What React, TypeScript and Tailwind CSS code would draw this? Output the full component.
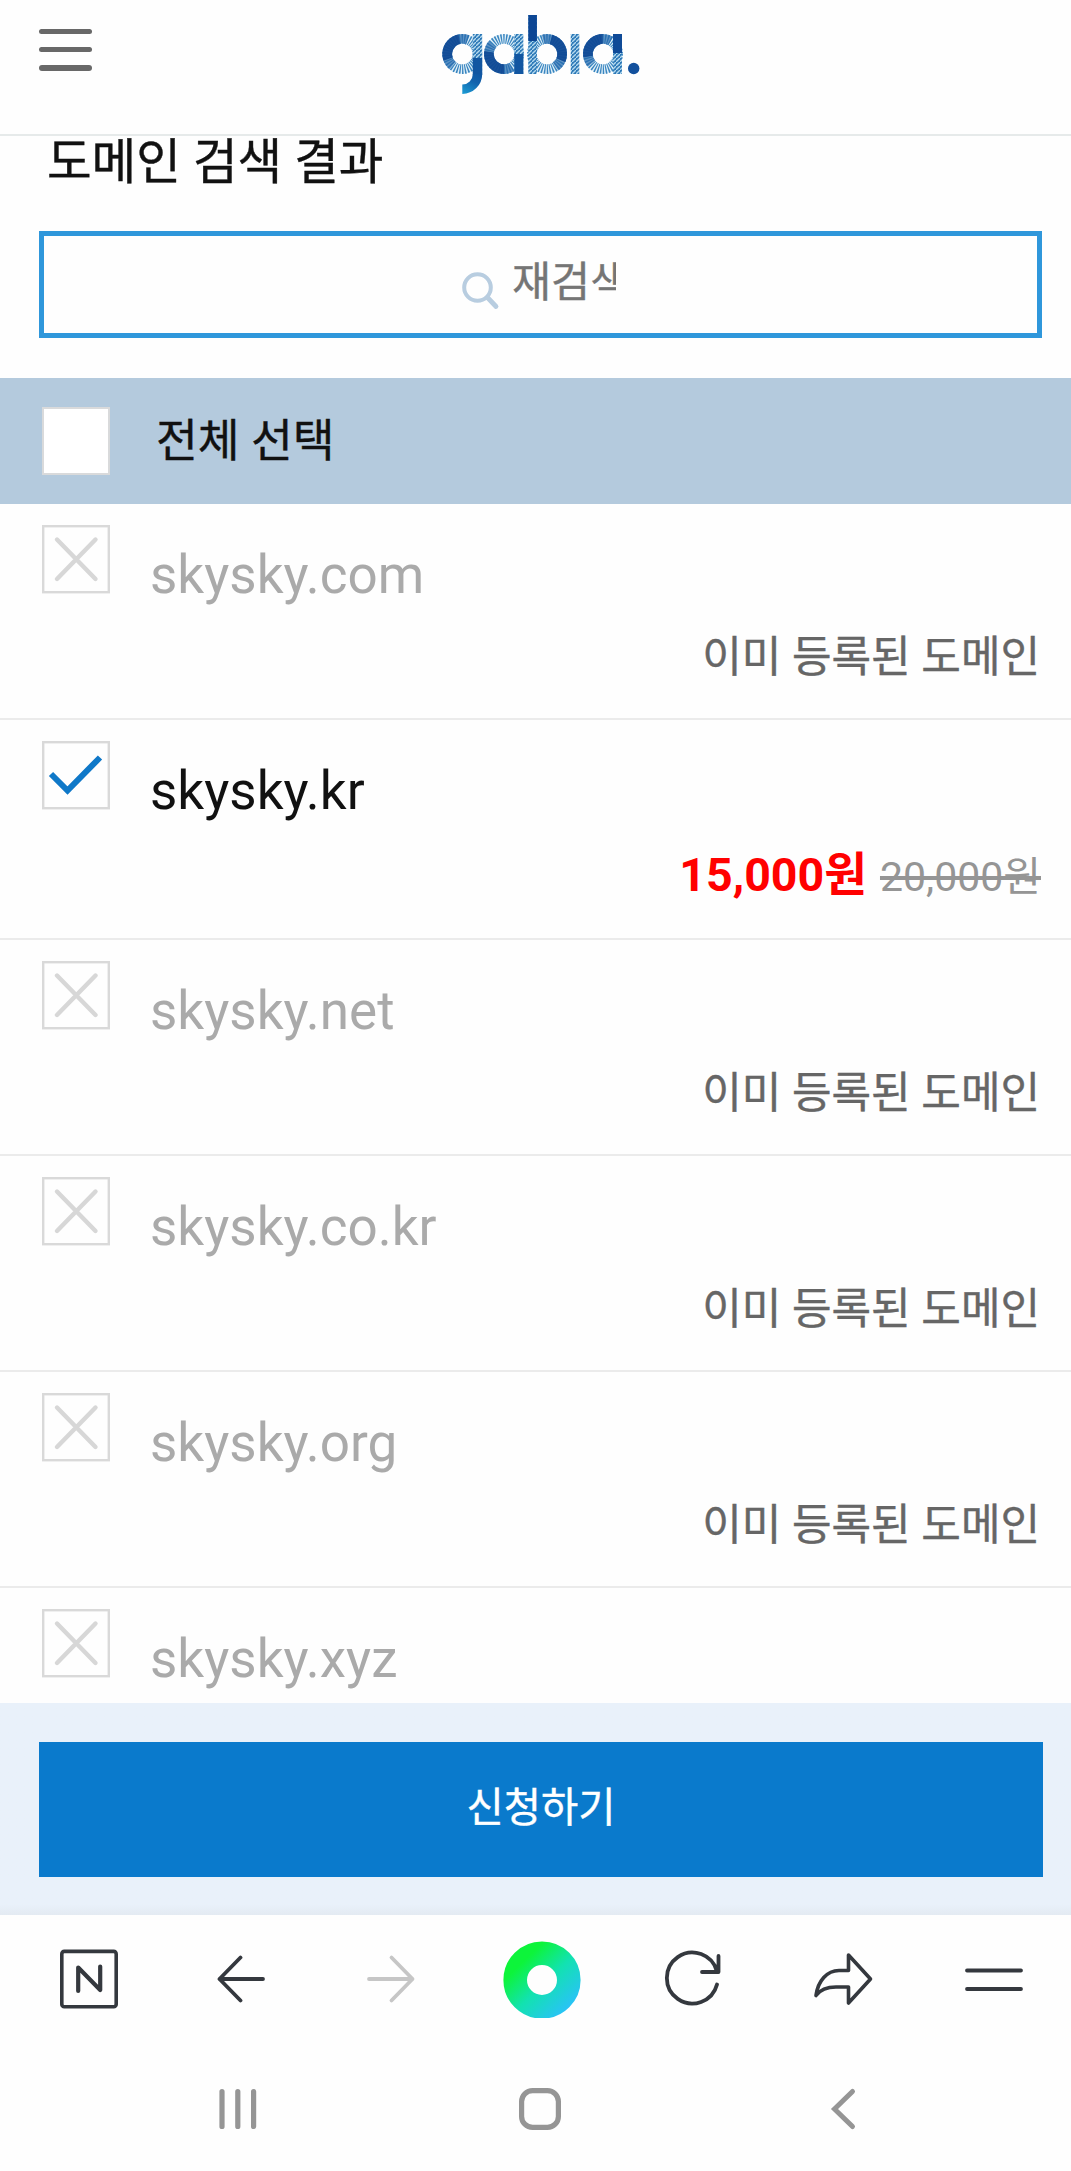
import { Fragment } from "react";

interface Domain {
  name: string;
  available: boolean;
  price?: string;
  originalPrice?: string;
}

const DOMAINS: Domain[] = [
  { name: "skysky.com", available: false },
  { name: "skysky.kr", available: true, price: "15,000원", originalPrice: "20,000원" },
  { name: "skysky.net", available: false },
  { name: "skysky.co.kr", available: false },
  { name: "skysky.org", available: false },
  { name: "skysky.xyz", available: false },
];

// Ring centre and the angle (deg) where its solid part starts
const RINGS = [
  { cx: 22.3, start: 130 },
  { cx: 64, start: 60 },
  { cx: 107, start: 255 },
  { cx: 163, start: 140 },
];

function GabiaLogo() {
  return (
    <svg width="200" height="84" viewBox="0 0 200 84" fill="none" role="img" aria-label="gabia">
      <defs>
        <linearGradient id="stem" gradientUnits="userSpaceOnUse" x1="37" y1="55" x2="22" y2="84">
          <stop offset="0" stopColor="#0f4f9d" />
          <stop offset="0.5" stopColor="#1263ad" />
          <stop offset="1" stopColor="#1c9fd6" />
        </linearGradient>
        <pattern id="weave" width="4" height="4" patternUnits="userSpaceOnUse">
          <rect width="4" height="4" fill="#2f7ab8" />
          <path d="M0 4L4 0" stroke="#b4d9ee" strokeWidth="1.3" />
        </pattern>
      </defs>
      {RINGS.map(({ cx, start }) => (
        <Fragment key={cx}>
          <circle cx={cx} cy="44" r="15.1" stroke="#e2f0f8" strokeWidth="9.4" />
          <circle cx={cx} cy="44" r="15.1" stroke="#3a86c0" strokeWidth="9.7" strokeDasharray="1.3 1.2" />
          <circle
            cx={cx}
            cy="44"
            r="15.1"
            stroke="#2468ac"
            strokeOpacity="0.7"
            strokeWidth="9.7"
            strokeDasharray="42 53"
            transform={`rotate(${start} ${cx} 44)`}
          />
          <circle
            cx={cx}
            cy="44"
            r="15.1"
            stroke="#0d4592"
            strokeOpacity="0.85"
            strokeWidth="9.7"
            strokeDasharray="26 69"
            transform={`rotate(${start + 30} ${cx} 44)`}
          />
        </Fragment>
      ))}
      <rect x="32.8" y="24" width="9.4" height="40" fill="url(#weave)" />
      <rect x="32.8" y="48" width="9.4" height="17" fill="#1256a1" />
      <path d="M37.5 64A15.2 15.2 0 0 1 22.3 79.2" stroke="url(#stem)" strokeWidth="9.4" />
      <rect x="74.3" y="24" width="9" height="40" fill="url(#weave)" />
      <rect x="74.3" y="44" width="9" height="20" fill="#1256a1" />
      <rect x="88.3" y="5" width="8.6" height="59" fill="url(#weave)" />
      <rect x="88.3" y="5" width="8.6" height="26" fill="#0d4694" />
      <rect x="130.7" y="24" width="8.6" height="40" fill="url(#weave)" />
      <rect x="173" y="24" width="9" height="40" fill="url(#weave)" />
      <rect x="173" y="24" width="9" height="19" fill="#0f4a97" />
      <circle cx="193.7" cy="58.5" r="5.7" fill="#12509d" />
    </svg>
  );
}

function Checkbox({ domain }: { domain: Domain }) {
  return (
    <svg width="68" height="69" viewBox="0 0 68 69" fill="none" className="shrink-0">
      <rect x="1.2" y="1.2" width="65.6" height="66" stroke="#d9d9d9" strokeWidth="2.4" />
      {domain.available ? (
        <path d="M9 33L25.5 49.5L58 16.5" stroke="#0f78c8" strokeWidth="6" />
      ) : (
        <path d="M15 14.5L53.5 54M53.5 14.5L15 54" stroke="#d7d7d7" strokeWidth="4.4" strokeLinecap="round" />
      )}
    </svg>
  );
}

function DomainRow({ domain }: { domain: Domain }) {
  return (
    <li
      className={`shrink-0 border-b-2 border-[#ebebeb] pt-[21px] pl-[42px] pr-[30px] ${
        domain.available ? "h-[220px]" : "h-[216px]"
      }`}
    >
      <div className="flex h-[102px]">
        <Checkbox domain={domain} />
        <span
          className={`ml-[40px] mt-[20px] text-[53px] leading-[60px] ${
            domain.available ? "text-[#111]" : "text-[#aaa]"
          }`}
        >
          {domain.name}
        </span>
      </div>
      {domain.available ? (
        <div className="flex items-baseline justify-end gap-[13px] pt-[2px]">
          <strong className="text-[46.5px] leading-[60px] font-bold text-[#f00]">{domain.price}</strong>
          <del className="text-[41px] leading-[60px] text-[#959595]">{domain.originalPrice}</del>
        </div>
      ) : (
        <p className="pr-[1px] text-right text-[43px] leading-[60px] text-[#666] [-webkit-text-stroke:0.4px]">
          이미 등록된 도메인
        </p>
      )}
    </li>
  );
}

function BrowserBar() {
  return (
    <div className="grid h-[128px] shrink-0 grid-cols-7 place-items-center pr-[2px] pl-[15px]">
      <svg width="60" height="62" viewBox="0 0 60 62" fill="none" stroke="#34383e" strokeWidth="3.6">
        <rect x="1.8" y="3.4" width="54.4" height="55.4" rx="2.5" />
        <path d="M18.2 43V19.5L40.2 42V18.5" strokeWidth="4.2" strokeLinecap="round" strokeLinejoin="round" />
      </svg>
      <svg width="50" height="50" viewBox="0 0 50 50" fill="none" stroke="#34383e" strokeWidth="3.8" strokeLinecap="round" strokeLinejoin="round">
        <path d="M24.5 3.5L3.5 25L24.5 46.5M3.5 25H47" />
      </svg>
      <svg width="50" height="50" viewBox="0 0 50 50" fill="none" stroke="#c6c6c6" strokeWidth="3.8" strokeLinecap="round" strokeLinejoin="round">
        <path d="M25.5 3.5L46.5 25L25.5 46.5M46.5 25H3" />
      </svg>
      <svg width="78" height="78" viewBox="0 0 78 78" fill="none">
        <defs>
          <linearGradient id="green-dot" gradientUnits="userSpaceOnUse" x1="14" y1="12" x2="66" y2="66">
            <stop offset="0.15" stopColor="#0df43a" />
            <stop offset="0.55" stopColor="#12e2b0" />
            <stop offset="1" stopColor="#28c4f4" />
          </linearGradient>
        </defs>
        <circle cx="39" cy="40" r="26.8" stroke="url(#green-dot)" strokeWidth="23.6" />
      </svg>
      <svg width="58" height="58" viewBox="0 0 58 58" fill="none" stroke="#34383e" strokeWidth="3.8" strokeLinecap="round" strokeLinejoin="round">
        <path d="M53 34.5A25.5 25.5 0 1 1 53 21.5M54.5 6V22H38" />
      </svg>
      <svg width="62" height="58" viewBox="0 0 62 58" fill="none" stroke="#34383e" strokeWidth="3.6" strokeLinecap="round" strokeLinejoin="round">
        <path d="M36.5 5L58.5 29L36.5 53V37H24C14 37 8 40 4 45.5C6 31 15 20.5 27 20.5H36.5Z" />
      </svg>
      <svg width="60" height="30" viewBox="0 0 60 30" fill="none" stroke="#34383e" strokeWidth="3.8" strokeLinecap="round">
        <path d="M3 6.5H57M3 25H57" />
      </svg>
    </div>
  );
}

function SystemNav() {
  return (
    <div className="grid h-[128px] shrink-0 grid-cols-3 place-items-center pt-[3px] pr-[77px] pl-[87px]">
      <svg width="42" height="44" viewBox="0 0 42 44" stroke="#959595" strokeWidth="5.2" strokeLinecap="round">
        <path d="M5 4.5V39.5M20.8 4.5V39.5M36.6 4.5V39.5" />
      </svg>
      <svg width="44" height="44" viewBox="0 0 44 44" fill="none" stroke="#959595" strokeWidth="5.2">
        <rect x="3.6" y="3.6" width="36.8" height="36.8" rx="11" />
      </svg>
      <svg width="28" height="44" viewBox="0 0 28 44" fill="none" stroke="#959595" strokeWidth="5" strokeLinecap="round">
        <path d="M23.5 4.5L5.5 22L23.5 39.5" />
      </svg>
    </div>
  );
}

export default function App() {
  return (
    <div className="flex h-[2171px] w-[1071px] flex-col overflow-hidden bg-[#fefefe] font-['Roboto','Noto_Sans_CJK_KR',sans-serif]">
      {/* Header */}
      <header className="flex h-[136px] shrink-0 items-start border-b-2 border-[#e6eaea]">
        <button aria-label="menu" className="mt-[29px] ml-[39px] flex flex-col gap-[13px]">
          <span className="h-[5px] w-[53px] rounded-full bg-[#686868]" />
          <span className="h-[5px] w-[53px] rounded-full bg-[#686868]" />
          <span className="h-[6px] w-[53px] rounded-full bg-[#686868]" />
        </button>
        <div className="ml-[348px] pt-[10px]">
          <GabiaLogo />
        </div>
      </header>

      {/* Search */}
      <section className="h-[242px] shrink-0 pr-[29px] pl-[39px]">
        <h1 className="h-[95px] pt-[1px] pl-[8px] text-[48.5px] leading-[52px] text-[#111] [-webkit-text-stroke:0.4px]">
          도메인 검색 결과
        </h1>
        <div className="flex h-[107px] items-start border-5 border-[#2f97db] pt-[17px] pl-[417px]">
          <svg width="40" height="40" viewBox="0 0 40 40" fill="none" stroke="#b8cde0" strokeWidth="4" strokeLinecap="round" className="mt-[18px]">
            <circle cx="16.5" cy="16.5" r="13.3" />
            <path d="M26.5 26.5L35 35.5" strokeWidth="4.8" />
          </svg>
          <span className="ml-[11px] w-[104px] overflow-hidden whitespace-nowrap text-[42.5px] leading-[60px] text-[#757575] [-webkit-text-stroke:0.4px]">
            재검색
          </span>
        </div>
      </section>

      {/* Select all */}
      <div className="flex h-[126px] shrink-0 items-center bg-[#b4cadd] pl-[42px]">
        <span className="size-[68px] border-[2.5px] border-[#d9dadb] bg-white" />
        <span className="mt-[2px] ml-[46px] text-[45.5px] leading-[60px] text-[#111] [-webkit-text-stroke:0.4px]">
          전체 선택
        </span>
      </div>

      {/* Results */}
      <ul className="flex h-[1199px] shrink-0 flex-col overflow-hidden">
        {DOMAINS.map((domain) => (
          <DomainRow key={domain.name} domain={domain} />
        ))}
      </ul>

      {/* Submit */}
      <footer className="h-[212px] shrink-0 bg-linear-to-b from-[#e9f1fa] from-95% to-[#e3eaf2] pt-[39px] pr-[28px] pl-[39px]">
        <button className="flex h-[135px] w-full items-center justify-center bg-[#0a7acc] pb-[4px] text-[40.5px] leading-[60px] text-white [-webkit-text-stroke:0.4px]">
          신청하기
        </button>
      </footer>

      <BrowserBar />
      <SystemNav />
    </div>
  );
}
